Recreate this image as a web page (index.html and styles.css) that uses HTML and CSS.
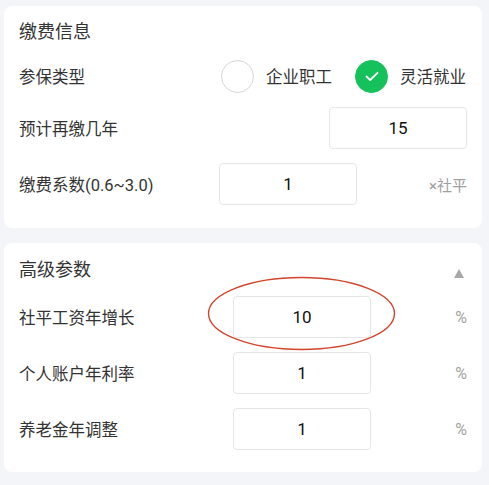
FILE: index.html
```html
<!DOCTYPE html>
<html lang="zh-CN">
<head>
    <meta charset="UTF-8">
    <meta name="viewport" content="width=device-width, initial-scale=1.0">
    <title>缴费信息</title>
    <link rel="stylesheet" href="styles.css">
</head>
<body>
    <div class="card card-basic">
        <div class="card-title">缴费信息</div>

        <div class="row row-type">
            <div class="label">参保类型</div>
            <div class="options">
                <div class="option">
                    <span class="radio"></span>
                    <span class="option-text">企业职工</span>
                </div>
                <div class="option">
                    <span class="radio checked">
                        <svg width="14" height="11" viewBox="0 0 14 11"><path d="M1.5 5.5 L5.2 9 L12.5 1.8" fill="none" stroke="#fff" stroke-width="1.8" stroke-linecap="round" stroke-linejoin="round"/></svg>
                    </span>
                    <span class="option-text">灵活就业</span>
                </div>
            </div>
        </div>

        <div class="row row-years">
            <div class="label">预计再缴几年</div>
            <div class="input">15</div>
        </div>

        <div class="row row-rate">
            <div class="label">缴费系数(0.6~3.0)</div>
            <div class="input">1</div>
            <div class="suffix suffix-wide">×社平</div>
        </div>
    </div>

    <div class="card card-advanced">
        <div class="card-title title-toggle">
            <span>高级参数</span>
            <span class="arrow-up"></span>
        </div>

        <div class="row">
            <div class="label">社平工资年增长</div>
            <div class="input marked">
                10
                <svg class="circle-mark" width="189" height="75" viewBox="0 0 189 75"><ellipse cx="94.5" cy="37.5" rx="93" ry="36" fill="none" stroke="#d4432c" stroke-width="1.4"/></svg>
            </div>
            <div class="suffix">%</div>
        </div>

        <div class="row">
            <div class="label">个人账户年利率</div>
            <div class="input">1</div>
            <div class="suffix">%</div>
        </div>

        <div class="row">
            <div class="label">养老金年调整</div>
            <div class="input">1</div>
            <div class="suffix">%</div>
        </div>
    </div>
</body>
</html>
```

FILE: styles.css
```css
body {
    margin: 0;
    padding: 6px 7px 11px 4px;
    background: #f4f5f9;
    font-family: Roboto, "Noto Sans CJK SC", sans-serif;
    color: #333;
}

.card {
    background: #fff;
    border-radius: 8px;
    padding: 14px 15px 23px 15px;
}

.card-advanced {
    margin-top: 15px;
    padding-top: 15px;
    padding-bottom: 22px;
}

.card-title {
    font-size: 18px;
    line-height: 24px;
    color: #333;
}

.title-toggle {
    display: flex;
    justify-content: space-between;
    align-items: center;
}

.arrow-up {
    width: 0;
    height: 0;
    border-left: 5px solid transparent;
    border-right: 5px solid transparent;
    border-bottom: 9px solid #a8a8a8;
    margin-right: 3px;
    margin-top: 6px;
}

.row {
    display: flex;
    align-items: center;
    height: 42px;
    margin-top: 14px;
}

.row-type {
    margin-top: 11px;
}

.row-years {
    margin-top: 10px;
}

.label {
    flex: 1;
    font-size: 16.5px;
    color: #333;
}

.options {
    display: flex;
    align-items: center;
    gap: 23px;
    margin-right: 1px;
}

.option {
    display: flex;
    align-items: center;
    gap: 12px;
}

.option-text {
    font-size: 16.5px;
    color: #333;
}

.radio {
    width: 31px;
    height: 31px;
    border: 1px solid #d6d6d6;
    border-radius: 50%;
    display: flex;
    align-items: center;
    justify-content: center;
    box-sizing: content-box;
}

.radio.checked {
    background: #14c15b;
    border-color: #14c15b;
}

.input {
    width: 136px;
    height: 40px;
    border: 1px solid #e6e6e6;
    border-radius: 4px;
    display: flex;
    align-items: center;
    justify-content: center;
    font-size: 17px;
    color: #111;
    position: relative;
}

.suffix {
    width: 96px;
    text-align: right;
    font-size: 16px;
    color: #a0a0a0;
}

.suffix-wide {
    width: 110px;
    font-size: 15px;
}

.circle-mark {
    position: absolute;
    left: -27px;
    top: -21px;
    pointer-events: none;
}
```
